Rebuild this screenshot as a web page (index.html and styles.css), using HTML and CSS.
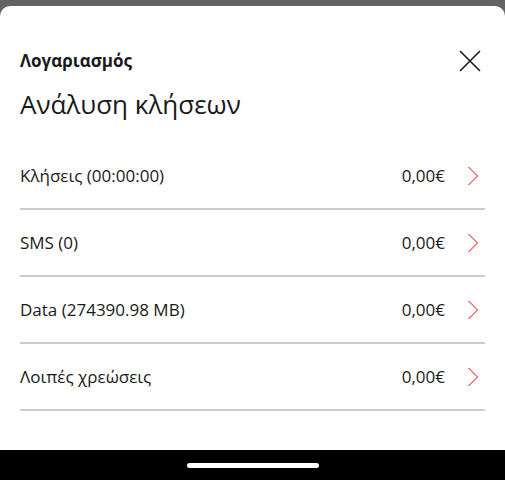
FILE: index.html
```html
<!doctype html>
<html>

<head>
  <meta charset='utf-8'>
  <title>Ανάλυση κλήσεων</title>
  <link rel="stylesheet" href="styles.css">
</head>

<body>
  <div class='sheet'>
    <div class='head'>
      <div class='label'>Λογαριασμός</div>
      <svg class='close' width='22' height='22' viewBox='0 0 22 22'>
        <path d='M1 1L21 21M21 1L1 21' stroke='#1a1a1a' stroke-width='1.6' fill='none'/>
      </svg>
    </div>
    <div class='title'>Ανάλυση κλήσεων</div>
    <div class='list'>
      <div class='row'>
        <span class='name'>Κλήσεις (00:00:00)</span>
        <span class='price'>0,00€</span>
        <svg class='arrow' width='12' height='20' viewBox='0 0 12 20'>
          <path d='M1.5 1L10.5 10L1.5 19' stroke='#e60000' stroke-width='1' fill='none'/>
        </svg>
      </div>
      <div class='row'>
        <span class='name'>SMS (0)</span>
        <span class='price'>0,00€</span>
        <svg class='arrow' width='12' height='20' viewBox='0 0 12 20'>
          <path d='M1.5 1L10.5 10L1.5 19' stroke='#e60000' stroke-width='1' fill='none'/>
        </svg>
      </div>
      <div class='row'>
        <span class='name'>Data (274390.98 MB)</span>
        <span class='price'>0,00€</span>
        <svg class='arrow' width='12' height='20' viewBox='0 0 12 20'>
          <path d='M1.5 1L10.5 10L1.5 19' stroke='#e60000' stroke-width='1' fill='none'/>
        </svg>
      </div>
      <div class='row'>
        <span class='name'>Λοιπές χρεώσεις</span>
        <span class='price'>0,00€</span>
        <svg class='arrow' width='12' height='20' viewBox='0 0 12 20'>
          <path d='M1.5 1L10.5 10L1.5 19' stroke='#e60000' stroke-width='1' fill='none'/>
        </svg>
      </div>
    </div>
  </div>
  <div class='homebar'>
    <div class='indicator'></div>
  </div>
</body>

</html>
```

FILE: styles.css
```css
* {
  margin: 0;
  padding: 0;
}
body {
  background: #636363;
  font-family: "Open Sans", "Noto Sans", sans-serif;
  color: #1a1a1a;
  padding-top: 6px;
}
.sheet {
  background: #fff;
  border-radius: 10px 10px 0 0;
  height: 444px;
  padding: 0 20px;
  box-sizing: border-box;
}
.head {
  display: flex;
  justify-content: space-between;
  align-items: center;
  padding-top: 44px;
}
.label {
  font-size: 17px;
  font-weight: 700;
  line-height: 22px;
}
.close {
  display: block;
  margin-right: 4px;
}
.title {
  font-size: 26px;
  line-height: 36px;
  margin-top: 14px;
}
.list {
  margin-top: 21px;
}
.row {
  display: flex;
  align-items: center;
  height: 65px;
  border-bottom: 2px solid #cccccc;
  font-size: 17px;
}
.name {
  flex: 1;
}
.price {
  margin-right: 22px;
}
.arrow {
  display: block;
  margin-right: 6px;
}
.homebar {
  height: 30px;
  background: #000;
  display: flex;
  justify-content: center;
  padding-top: 13px;
  box-sizing: border-box;
}
.indicator {
  width: 132px;
  height: 5px;
  border-radius: 3px;
  background: #fff;
}
```
